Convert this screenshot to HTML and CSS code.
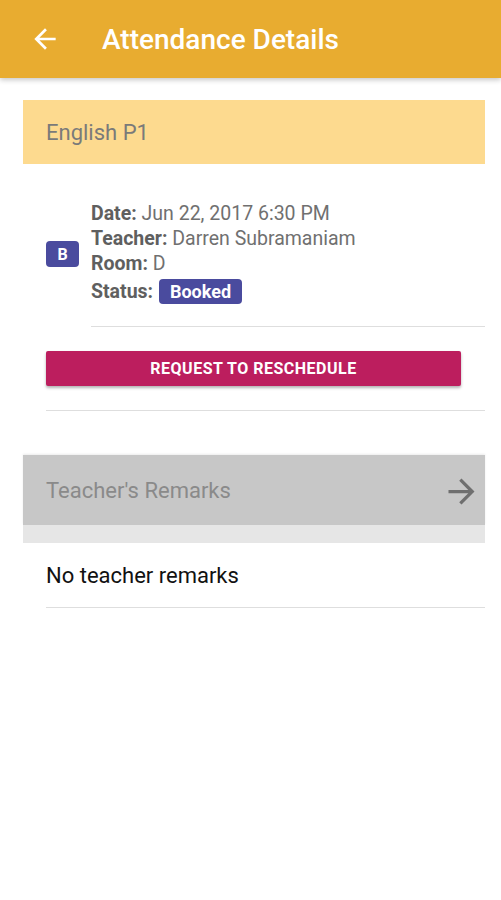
FILE: index.html
```html
<!DOCTYPE html>
<html>
<head>
<meta charset="utf-8">
<link rel="stylesheet" href="styles.css">
</head>
<body>
<header class="appbar">
  <svg class="back" width="24" height="24" viewBox="0 0 24 24"><path d="M20 11H7.83l5.59-5.59L12 4l-8 8 8 8 1.41-1.41L7.83 13H20v-2z" fill="#fff"/></svg>
  <h1 class="title">Attendance Details</h1>
</header>
<main class="content">
  <div class="course">English P1</div>
  <div class="details">
    <div class="badge-col"><span class="badge">B</span></div>
    <div class="info">
      <div class="line"><b>Date:</b> Jun 22, 2017 6:30 PM</div>
      <div class="line"><b>Teacher:</b> Darren Subramaniam</div>
      <div class="line"><b>Room:</b> D</div>
      <div class="line"><b>Status:</b> <span class="status">Booked</span></div>
    </div>
  </div>
  <div class="divider inner"></div>
  <div class="btn-wrap"><button class="btn">REQUEST TO RESCHEDULE</button></div>
  <div class="divider outer"></div>
  <div class="remarks-head">
    <span>Teacher's Remarks</span>
    <svg class="fwd" width="28" height="28" viewBox="0 0 24 24"><path d="M12 4l-1.41 1.41L16.17 11H4v2h12.17l-5.58 5.59L12 20l8-8z" fill="#6f6f6f"/></svg>
  </div>
  <div class="remarks-strip"></div>
  <div class="remarks-body">No teacher remarks</div>
  <div class="divider last"></div>
</main>
</body>
</html>
```
FILE: styles.css
```css
* { box-sizing: border-box; }
body {
  margin: 0;
  font-family: Roboto, "Noto Sans", sans-serif;
  background: #fff;
  width: 501px;
  height: 900px;
  overflow: hidden;
}
.appbar {
  height: 78px;
  background: #e8ac30;
  display: flex;
  align-items: center;
  padding-left: 29px;
  box-shadow: 0 2px 5px rgba(0,0,0,0.22);
  position: relative;
}
.back { width: 32px; height: 32px; flex: none; }
.title {
  margin: 0 0 0 41px;
  color: #fff;
  font-size: 28px;
  font-weight: 500;
  letter-spacing: 0;
}
.content { padding: 22px 16px 0 23px; }
.course {
  height: 64px;
  background: #fdda8f;
  color: #7a7a7a;
  font-size: 22px;
  display: flex;
  align-items: center;
  padding-left: 23px;
}
.details {
  display: flex;
  align-items: center;
  padding: 37px 0 0 23px;
}
.badge-col { width: 45px; }
.badge {
  display: inline-flex;
  align-items: center;
  justify-content: center;
  width: 33px;
  height: 26px;
  border-radius: 4px;
  background: #4a4b9e;
  color: #fff;
  font-weight: 700;
  font-size: 16px;
}
.info { color: #707070; font-size: 19.5px; }
.line { line-height: 25px; height: 25px; white-space: nowrap; }
.line:last-child { height: 31px; line-height: 31px; }
.info b { color: #5f5f5f; font-weight: 700; }
.status {
  display: inline-block;
  background: #4a4b9e;
  color: #fff;
  font-weight: 700;
  font-size: 18px;
  padding: 0 11px;
  line-height: 25px;
  border-radius: 4px;
  margin-left: 1px;
  vertical-align: 0;
}
.divider { height: 1px; background: #dedede; }
.divider.inner { margin: 19px 0 0 68px; }
.btn-wrap { padding: 24px 24px 0 23px; }
.btn {
  width: 100%;
  height: 35px;
  border: 0;
  border-radius: 2px;
  background: #bc1e5e;
  color: #fff;
  font-family: Roboto, sans-serif;
  font-weight: 700;
  font-size: 16px;
  letter-spacing: 0.5px;
  box-shadow: 0 2px 3px rgba(0,0,0,0.3);
}
.divider.outer { margin: 24px 0 0 23px; }
.remarks-head {
  margin-top: 44px;
  height: 70px;
  background: #c7c7c7;
  display: flex;
  align-items: center;
  justify-content: space-between;
  padding: 0 4px 0 23px;
  color: #8a8a8a;
  font-size: 22px;
  box-shadow: 0 -1px 2px rgba(0,0,0,0.08);
}
.fwd { width: 39px; height: 39px; margin-top: 2px; flex: none; }
.remarks-strip { height: 18px; background: #e6e6e6; }
.remarks-body {
  height: 64px;
  display: flex;
  align-items: center;
  padding: 1px 0 0 23px;
  font-size: 22px;
  color: #111;
}
.divider.last { margin: 0 0 0 23px; }
```
